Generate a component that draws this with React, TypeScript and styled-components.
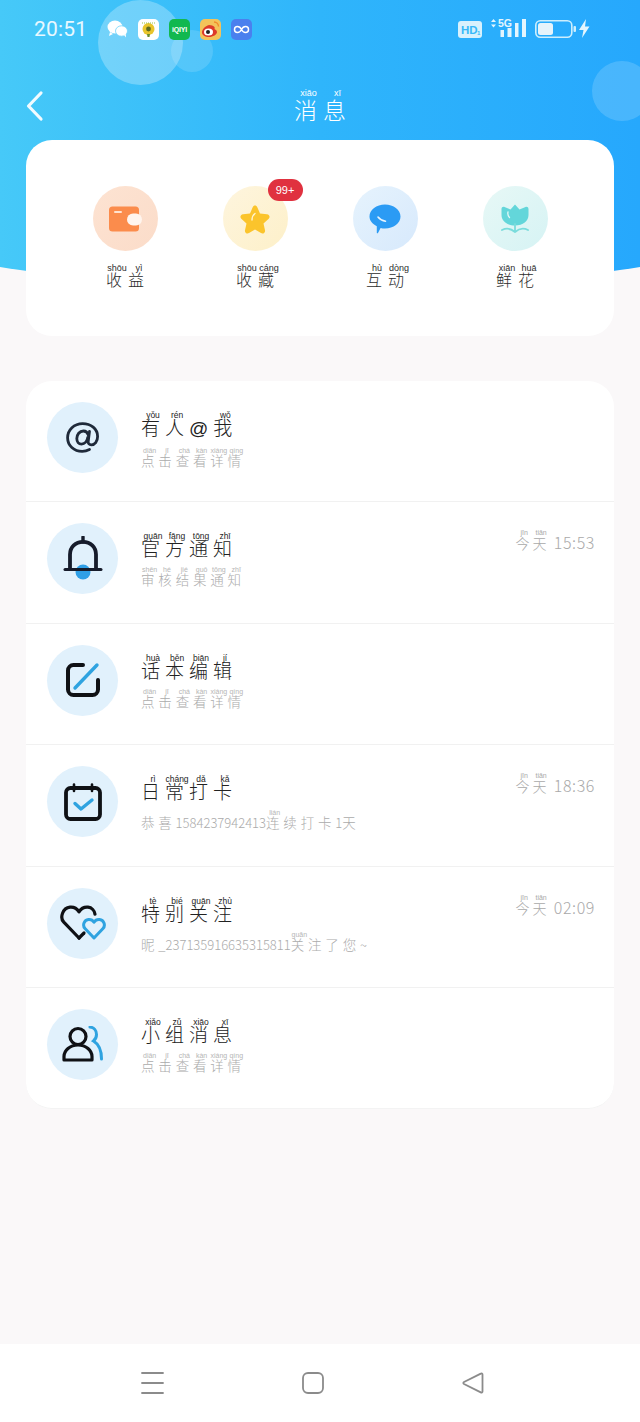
import React from 'react';
import styled, { createGlobalStyle } from 'styled-components';

const GlobalStyle = createGlobalStyle`
  html, body {
    margin: 0;
    padding: 0;
    background: #faf8f9;
  }
  * {
    box-sizing: border-box;
  }
`;

const SPage = styled.div`
  position: relative;
  width: 640px;
  height: 1422px;
  overflow: hidden;
  display: flex;
  flex-direction: column;
  background: #faf8f9;
  font-family: 'Noto Sans CJK SC', 'Noto Sans', sans-serif;
`;

const SHeader = styled.header`
  position: relative;
  height: 292px;
  margin-bottom: -152px;
  flex-shrink: 0;
  overflow: hidden;
  background: linear-gradient(90deg, #46c9f8 0%, #2fb5fb 50%, #26a8fd 100%);
  clip-path: ellipse(640px 180px at 320px 111px);
`;

const SBubble = styled.div<{ $size: number; $x: number; $y: number; $alpha: number }>`
  position: absolute;
  left: ${(p) => p.$x}px;
  top: ${(p) => p.$y}px;
  width: ${(p) => p.$size}px;
  height: ${(p) => p.$size}px;
  border-radius: 50%;
  background: rgba(255, 255, 255, ${(p) => p.$alpha});
`;

const SStatusBar = styled.div`
  position: relative;
  display: flex;
  align-items: center;
  height: 58px;
  padding: 0 50px 0 34px;
  color: #fff;
`;

const STime = styled.span`
  width: 73px;
  font-family: 'Roboto', sans-serif;
  font-size: 21px;
  letter-spacing: 0.2px;
  color: #e8f8ff;
`;

const SAppIcons = styled.div`
  display: flex;
  align-items: center;
  gap: 10px;
`;

const SAppIcon = styled.div<{ $bg: string }>`
  width: 21px;
  height: 21px;
  border-radius: 5px;
  background: ${(p) => p.$bg};
  display: flex;
  align-items: center;
  justify-content: center;
  overflow: hidden;
`;

const SIqiyi = styled.span`
  font-family: 'Liberation Sans', sans-serif;
  font-size: 7px;
  font-weight: 700;
  color: #fff;
  letter-spacing: -0.2px;
`;

const SStatusRight = styled.div`
  margin-left: auto;
  display: flex;
  align-items: center;
`;

const SNavRow = styled.div`
  position: relative;
  display: flex;
  align-items: center;
  justify-content: center;
  height: 60px;
  margin-top: 18px;
  color: #fff;
`;

const SBack = styled.svg`
  position: absolute;
  left: 24px;
  top: 14px;
`;

const STitle = styled.h1`
  margin: 0 0 0 6px;
  font-size: 23px;
  font-weight: 300;
  line-height: 28px;
  letter-spacing: 6px;
  color: #fff;
`;

const SRuby = styled.ruby`
  ruby-position: over;
  rt {
    font-family: 'Liberation Sans', sans-serif;
    font-size: 9px;
    font-weight: 400;
    letter-spacing: 0;
    line-height: 9px;
  }
`;

const SLatin = styled.span`
  font-family: 'Liberation Sans', sans-serif;
`;

const SCard = styled.section`
  position: relative;
  margin: 0 26px;
  border-radius: 26px;
  background: #fff;
`;

const SShortcuts = styled(SCard)`
  height: 196px;
  flex-shrink: 0;
  padding-top: 46px;
  display: grid;
  grid-template-columns: repeat(4, 130px);
  justify-content: center;
`;

const SShortcut = styled.div`
  display: flex;
  flex-direction: column;
  align-items: center;
  gap: 11px;
`;

const SShortcutCircle = styled.div<{ $from: string; $to: string }>`
  position: relative;
  width: 65px;
  height: 65px;
  border-radius: 50%;
  display: flex;
  align-items: center;
  justify-content: center;
  background: linear-gradient(135deg, ${(p) => p.$from}, ${(p) => p.$to});
`;

const SBadge = styled.span`
  position: absolute;
  top: -7px;
  left: 45px;
  width: 35px;
  height: 22px;
  border-radius: 11px;
  display: flex;
  align-items: center;
  justify-content: center;
  background: #e0313f;
  color: #fff;
  font-family: 'Liberation Sans', sans-serif;
  font-size: 11px;
`;

const SShortcutLabel = styled.div`
  font-size: 16px;
  font-weight: 300;
  line-height: 22px;
  letter-spacing: 6px;
  margin-right: -6px;
  color: #2c2c2c;
  rt {
    position: relative;
    top: 2px;
  }
`;

const SList = styled(SCard)`
  margin-top: 45px;
  flex-shrink: 0;
`;

const SRow = styled.div`
  height: 121.4px;
  padding: 21px 19px 0 21px;
  display: flex;
  align-items: flex-start;
  border-bottom: 1.5px solid #f1f1f1;
  &:last-child {
    border-bottom: 1px solid #f3f3f3;
    border-radius: 0 0 26px 26px;
  }
`;

const SRowIcon = styled.div`
  width: 71px;
  height: 71px;
  flex-shrink: 0;
  border-radius: 50%;
  background: #e1f1fc;
  display: flex;
  align-items: center;
  justify-content: center;
`;

const SRowBody = styled.div`
  margin: 7px 0 0 23px;
  flex: 1;
  min-width: 0;
`;

const SRowTitle = styled.div`
  font-size: 19px;
  font-weight: 300;
  line-height: 27px;
  letter-spacing: 5px;
  color: #222;
  rt {
    position: relative;
    top: 2px;
    font-size: 8.5px;
  }
`;

const SRowSub = styled.div`
  margin-top: 5px;
  font-size: 13.5px;
  font-weight: 300;
  line-height: 20px;
  letter-spacing: 3.8px;
  color: #ababab;
  white-space: nowrap;
  rt {
    font-size: 7px;
    line-height: 7px;
    color: #b5b5b5;
  }
  ${SLatin} {
    font-family: inherit;
    font-size: 13px;
    letter-spacing: 0;
  }
`;

const SRowTime = styled.div`
  margin-top: 6px;
  font-size: 16px;
  font-weight: 300;
  line-height: 24px;
  letter-spacing: 0.6px;
  color: #a9a9a9;
  white-space: nowrap;
  ruby {
    font-size: 14px;
    letter-spacing: 3px;
  }
  rt {
    font-size: 7px;
    line-height: 7px;
  }
`;

const SNavBar = styled.nav`
  margin-top: auto;
  height: 78px;
  flex-shrink: 0;
  display: grid;
  grid-template-columns: 26px 26px 26px;
  justify-content: space-between;
  align-items: center;
  padding: 0 154px 0 140px;
  background: #fff;
  svg {
    display: block;
  }
`;

type Word = [string, string?];

const Ruby = ({ words }: { words: Word[] }) => (
  <>
    {words.map(([text, pinyin], i) => {
      if (pinyin) {
        return (
          <SRuby key={i}>
            {text}
            <rt>{pinyin}</rt>
          </SRuby>
        );
      }
      return /^[\x20-\x7e]+$/.test(text) ? <SLatin key={i}>{text}</SLatin> : <span key={i}>{text}</span>;
    })}
  </>
);

const ClickDetail: Word[] = [
  ['点', 'diǎn'],
  ['击', 'jī'],
  ['查', 'chá'],
  ['看', 'kàn'],
  ['详', 'xiáng'],
  ['情', 'qíng'],
];

const Today: Word[] = [
  ['今', 'jīn'],
  ['天', 'tiān'],
];

const AtIcon = () => (
  <svg width="36" height="34" viewBox="0 0 36 34" fill="none">
    <path
      d="M24.5 28.5c-2.2 1.2-4.6 1.9-7.3 1.9C9 30.4 2.6 24.6 2.6 16.8 2.6 8.9 9.1 2.6 17.6 2.6c8.3 0 15 5.3 15 12.8 0 5.1-2.9 8.4-6.3 8.4-2.1 0-3.3-1.3-3.1-3.3l1.3-10.1"
      stroke="#1f2a3a"
      strokeWidth="2.8"
      strokeLinecap="round"
    />
    <path
      d="M23.2 13.8c-.7-2.5-2.5-3.8-4.8-3.8-3.8 0-6.6 3.5-6.6 7.6 0 3.3 1.9 5.6 4.7 5.6 3.2 0 5.8-3.1 6.3-6.9"
      stroke="#1f2a3a"
      strokeWidth="2.8"
      strokeLinecap="round"
    />
  </svg>
);

const BellIcon = () => (
  <svg width="40" height="46" viewBox="0 0 40 46" fill="none">
    <circle cx="20" cy="36" r="7.5" fill="#2f9fe6" />
    <path d="M20 1v5" stroke="#161c2b" strokeWidth="3.4" strokeLinecap="round" />
    <path d="M7 32V18.5C7 11 12.5 5.8 20 5.8S33 11 33 18.5V32" stroke="#161c2b" strokeWidth="3.8" />
    <path d="M2 33.5h36" stroke="#161c2b" strokeWidth="3" strokeLinecap="round" />
  </svg>
);

const EditIcon = () => (
  <svg width="36" height="36" viewBox="0 0 36 36" fill="none">
    <path
      d="M18 3H8.5C5.5 3 3 5.5 3 8.5v19C3 30.5 5.5 33 8.5 33h19c3 0 5.5-2.5 5.5-5.5V18"
      stroke="#0f1115"
      strokeWidth="4"
      strokeLinecap="round"
    />
    <path d="M10 26L32 3" stroke="#2fa3e0" strokeWidth="3.4" strokeLinecap="round" />
  </svg>
);

const CalendarIcon = () => (
  <svg width="38" height="38" viewBox="0 0 38 38" fill="none">
    <rect x="2" y="5" width="34" height="31" rx="4.5" stroke="#0f1115" strokeWidth="3.8" />
    <path d="M10 1.5V8M28 1.5V8" stroke="#0f1115" strokeWidth="2.6" strokeLinecap="round" />
    <path d="M11 20.5l6 5.5 11-9" stroke="#2fa3e0" strokeWidth="3.4" strokeLinecap="round" strokeLinejoin="round" />
  </svg>
);

const HeartIcon = () => (
  <svg width="46" height="36" viewBox="0 0 46 36" fill="none">
    <path
      d="M19 33L3.8 17.2C-.5 12.5 2.7 3 10 2.2c3.8-.4 7 1.5 9 4.6 2-3.1 5.2-5 9-4.6 3.8.4 6.5 3.4 7 7"
      stroke="#0f1115"
      strokeWidth="3.2"
      strokeLinecap="round"
      strokeLinejoin="round"
    />
    <path d="M19 33l5-5" stroke="#0f1115" strokeWidth="3.2" strokeLinecap="round" />
    <path
      d="M34 33l-9-9.5c-2.8-3-1-8.5 3.5-9 2.3-.2 4.3.8 5.5 2.7 1.2-1.9 3.2-2.9 5.5-2.7 4.5.5 6.3 6 3.5 9L34 33z"
      fill="#e1f1fc"
      stroke="#2fa3e0"
      strokeWidth="3"
      strokeLinejoin="round"
    />
  </svg>
);

const GroupIcon = () => (
  <svg width="42" height="36" viewBox="0 0 42 36" fill="none">
    <circle cx="16" cy="10.5" r="8" stroke="#0f1115" strokeWidth="3.2" />
    <path d="M2 34v-3.5C2 24.5 8 19 16 19s14 5.5 14 11.5V34H2z" stroke="#0f1115" strokeWidth="3.2" strokeLinejoin="round" />
    <path d="M28 1c4 .5 6.5 3.5 6.5 7.5 0 2.5-1 4.8-3 6.5 5 3 8 8.5 8 18" stroke="#2fa3e0" strokeWidth="3" strokeLinecap="round" />
  </svg>
);

const rows: { key: string; icon: React.ReactNode; title: Word[]; sub: Word[]; time?: string }[] = [
  {
    key: 'at',
    icon: <AtIcon />,
    title: [['有', 'yǒu'], ['人', 'rén'], ['@'], ['我', 'wǒ']],
    sub: ClickDetail,
  },
  {
    key: 'official',
    icon: <BellIcon />,
    title: [['官', 'guān'], ['方', 'fāng'], ['通', 'tōng'], ['知', 'zhī']],
    sub: [['审', 'shěn'], ['核', 'hé'], ['结', 'jié'], ['果', 'guǒ'], ['通', 'tōng'], ['知', 'zhī']],
    time: '15:53',
  },
  {
    key: 'script',
    icon: <EditIcon />,
    title: [['话', 'huà'], ['本', 'běn'], ['编', 'biān'], ['辑', 'jí']],
    sub: ClickDetail,
  },
  {
    key: 'checkin',
    icon: <CalendarIcon />,
    title: [['日', 'rì'], ['常', 'cháng'], ['打', 'dǎ'], ['卡', 'kǎ']],
    sub: [['恭喜'], ['1584237942413'], ['连', 'lián'], ['续打卡'], ['1'], ['天']],
    time: '18:36',
  },
  {
    key: 'follow',
    icon: <HeartIcon />,
    title: [['特', 'tè'], ['别', 'bié'], ['关', 'guān'], ['注', 'zhù']],
    sub: [['昵'], ['_237135916635315811'], ['关', 'guān'], ['注了您'], ['~']],
    time: '02:09',
  },
  {
    key: 'group',
    icon: <GroupIcon />,
    title: [['小', 'xiǎo'], ['组', 'zǔ'], ['消', 'xiāo'], ['息', 'xī']],
    sub: ClickDetail,
  },
];

const App = () => {
  return (
    <SPage>
      <GlobalStyle />
      <SHeader>
        <SBubble $size={85} $x={98} $y={0} $alpha={0.27} />
        <SBubble $size={42} $x={171} $y={30} $alpha={0.14} />
        <SBubble $size={60} $x={592} $y={61} $alpha={0.16} />
        <SStatusBar>
          <STime>20:51</STime>
          <SAppIcons>
            <SAppIcon $bg="transparent">
              <svg width="21" height="18" viewBox="0 0 21 18">
                <ellipse cx="8" cy="7" rx="7.5" ry="6.5" fill="#fff" />
                <ellipse cx="14.5" cy="11" rx="6" ry="5.2" fill="#fff" stroke="#6fd3fa" strokeWidth="0.8" />
                <path d="M3 12l-1 4 4-2zM17 15l2 2.5-.2-3.5z" fill="#fff" />
              </svg>
            </SAppIcon>
            <SAppIcon $bg="#fff">
              <svg width="21" height="21" viewBox="0 0 21 21">
                <circle cx="10.5" cy="10" r="6" fill="#e8c52c" />
                <circle cx="10.5" cy="10" r="2.4" fill="#5d6b22" />
                <path d="M9 15h3l-.5 3h-2z" fill="#6a8d2f" />
                <path d="M4 4h13" stroke="#9ac24a" strokeWidth="1" strokeDasharray="1 1" />
              </svg>
            </SAppIcon>
            <SAppIcon $bg="#12b84f">
              <SIqiyi>iQIYI</SIqiyi>
            </SAppIcon>
            <SAppIcon $bg="#f3c35a">
              <svg width="21" height="21" viewBox="0 0 21 21">
                <path d="M9 6c-4 1-7 4.5-7 7.5C2 16 5 18 9 18s8-2.5 8-5c0-2-2-2.5-2.5-3 .8-2-.5-3.5-5.5-4z" fill="#dd3a2a" />
                <ellipse cx="8.5" cy="13" rx="4.5" ry="3.5" fill="#fff" />
                <circle cx="8" cy="13" r="2" fill="#222" />
                <path d="M14 3c2.5 0 4.5 2 4.5 4.5" stroke="#f08a2c" strokeWidth="1.4" fill="none" />
              </svg>
            </SAppIcon>
            <SAppIcon $bg="#4a80ee">
              <svg width="21" height="21" viewBox="0 0 21 21" fill="none">
                <path
                  d="M10.5 10.5c-1-2-2.3-3-4-3a3 3 0 0 0 0 6c1.7 0 3-1 4-3zm0 0c1-2 2.3-3 4-3a3 3 0 0 1 0 6c-1.7 0-3-1-4-3z"
                  stroke="#fff"
                  strokeWidth="1.5"
                />
              </svg>
            </SAppIcon>
          </SAppIcons>
          <SStatusRight>
            <svg width="132" height="22" viewBox="0 0 132 22" fill="none">
              <rect x="0" y="3" width="24" height="17" rx="3" fill="#d8f1fd" />
              <text x="3" y="16" fontFamily="Liberation Sans" fontSize="11.5" fontWeight="700" fill="#37b8f8">HD</text>
              <text x="19" y="17" fontFamily="Liberation Sans" fontSize="6" fontWeight="700" fill="#37b8f8">1</text>
              <path d="M33 4l2.5-3 2.5 3zM33 6.5l2.5 3 2.5-3z" fill="#e3f5fe" />
              <text x="40" y="9" fontFamily="Liberation Sans" fontSize="10.5" fontWeight="700" fill="#e3f5fe">5G</text>
              <rect x="42.5" y="12" width="3.5" height="7" fill="#e3f5fe" />
              <rect x="49.5" y="10" width="4" height="9" fill="#e3f5fe" />
              <rect x="57" y="5" width="3.5" height="14" fill="#e3f5fe" />
              <rect x="64" y="1" width="4" height="18" fill="#e3f5fe" />
              <rect x="77.8" y="2.8" width="36" height="16.5" rx="4.5" stroke="#cdeefd" strokeWidth="1.6" />
              <rect x="80" y="5" width="15" height="12" rx="2.5" fill="#e6f3fb" />
              <rect x="115.5" y="8" width="2.5" height="6" rx="1" fill="#cdeefd" />
              <path d="M128 1l-7 11h4.5l-1.5 8 7.5-11.5h-4.5z" fill="#e3f5fe" />
            </svg>
          </SStatusRight>
        </SStatusBar>
        <SNavRow>
          <SBack width="22" height="32" viewBox="0 0 22 32" fill="none">
            <path d="M17 3L4.5 16 17 29" stroke="#f2fbff" strokeWidth="3.2" strokeLinecap="round" strokeLinejoin="round" />
          </SBack>
          <STitle>
            <Ruby words={[['消', 'xiāo'], ['息', 'xī']]} />
          </STitle>
        </SNavRow>
      </SHeader>

      <SShortcuts>
        <SShortcut>
          <SShortcutCircle $from="#fde3d2" $to="#fbdcc9">
            <svg width="34" height="26" viewBox="-1 0 34 26">
              <rect x="0" y="0.5" width="30" height="25" rx="3.5" fill="#fb8c4c" />
              <rect x="5" y="5" width="8" height="2" rx="1" fill="#ffe3d0" />
              <rect x="18" y="7.5" width="15" height="12" rx="6" fill="#fff5ee" />
            </svg>
          </SShortcutCircle>
          <SShortcutLabel>
            <Ruby words={[['收', 'shōu'], ['益', 'yì']]} />
          </SShortcutLabel>
        </SShortcut>
        <SShortcut>
          <SShortcutCircle $from="#fef5de" $to="#fdf0c9">
            <SBadge>99+</SBadge>
            <svg width="32" height="30" viewBox="0 0 32 30">
              <path
                d="M16 1.5c1 0 1.8.7 2.3 1.7l2.7 6.3 7 .7c2.5.3 3.4 2.8 1.7 4.5l-5.2 4.8 1.5 6.8c.5 2.4-1.9 4-4 2.8L16 25.5l-6 3.6c-2.1 1.2-4.5-.4-4-2.8l1.5-6.8-5.2-4.8c-1.7-1.7-.8-4.2 1.7-4.5l7-.7 2.7-6.3c.5-1 1.3-1.7 2.3-1.7z"
                fill="#fbc42c"
              />
              <path d="M13 16c0-3 1-5 3-6.5" stroke="#fff3cf" strokeWidth="1.4" fill="none" strokeLinecap="round" />
            </svg>
          </SShortcutCircle>
          <SShortcutLabel>
            <Ruby words={[['收', 'shōu'], ['藏', 'cáng']]} />
          </SShortcutLabel>
        </SShortcut>
        <SShortcut>
          <SShortcutCircle $from="#e6f3fd" $to="#d7e9fc">
            <svg width="32" height="30" viewBox="0 0 32 30">
              <path
                d="M16 .5c8.5 0 15.5 5.4 15.5 12S24.5 24.5 16 24.5c-1.6 0-3-.2-4.4-.6L9 29c-.3.6-1.2.4-1.2-.3v-6.5C3.4 20 .5 16.5.5 12.500c0-6.600 7-12 15.500-12z"
                fill="#2b9bf4"
              />
              <path d="M9 13c2 2.5 4.5 3.8 7.5 4.2" stroke="#e8f4fe" strokeWidth="1.6" fill="none" strokeLinecap="round" />
            </svg>
          </SShortcutCircle>
          <SShortcutLabel>
            <Ruby words={[['互', 'hù'], ['动', 'dòng']]} />
          </SShortcutLabel>
        </SShortcut>
        <SShortcut>
          <SShortcutCircle $from="#e7f8f6" $to="#d6f3f4">
            <svg width="28" height="29" viewBox="0 0 28 29">
              <path
                d="M14 .5l4.5 5 6-2.5c1.6-.5 3 .4 3 2v6c0 6-5.500 10.500-13.500 10.500S.5 17 .5 11V5c0-1.600 1.400-2.500 3-2l6 2.500z"
                fill="#63d6da"
              />
              <path d="M14 20v8M1 26c4-2 9-1.5 13 2 4-3.5 9-4 13-2" stroke="#7adcdc" strokeWidth="1.8" fill="none" strokeLinecap="round" />
              <path d="M7 8c-.5 2 0 4 1.5 5.5" stroke="#dff8f7" strokeWidth="1.3" fill="none" strokeLinecap="round" />
            </svg>
          </SShortcutCircle>
          <SShortcutLabel>
            <Ruby words={[['鲜', 'xiān'], ['花', 'huā']]} />
          </SShortcutLabel>
        </SShortcut>
      </SShortcuts>

      <SList>
        {rows.map((row) => (
          <SRow key={row.key}>
            <SRowIcon>{row.icon}</SRowIcon>
            <SRowBody>
              <SRowTitle>
                <Ruby words={row.title} />
              </SRowTitle>
              <SRowSub>
                <Ruby words={row.sub} />
              </SRowSub>
            </SRowBody>
            {row.time && (
              <SRowTime>
                <Ruby words={Today} /> {row.time}
              </SRowTime>
            )}
          </SRow>
        ))}
      </SList>

      <SNavBar>
        <svg width="26" height="24" viewBox="0 0 26 24" fill="none">
          <path d="M2 2h21M2 12h21M2 22h21" stroke="#8b8b8b" strokeWidth="1.8" strokeLinecap="round" />
        </svg>
        <svg width="26" height="24" viewBox="0 0 26 24" fill="none">
          <rect x="3" y="2" width="20" height="20" rx="5" stroke="#8b8b8b" strokeWidth="1.8" />
        </svg>
        <svg width="26" height="24" viewBox="0 0 26 24" fill="none">
          <path
            d="M22.5 3.5v17c0 1-.8 1.4-1.7.9L4 13c-.9-.5-.9-1.5 0-2l16.800-8.400c.9-.5 1.700 0 1.700.9z"
            stroke="#8b8b8b"
            strokeWidth="1.8"
            strokeLinejoin="round"
          />
        </svg>
      </SNavBar>
    </SPage>
  );
};

export default App;
